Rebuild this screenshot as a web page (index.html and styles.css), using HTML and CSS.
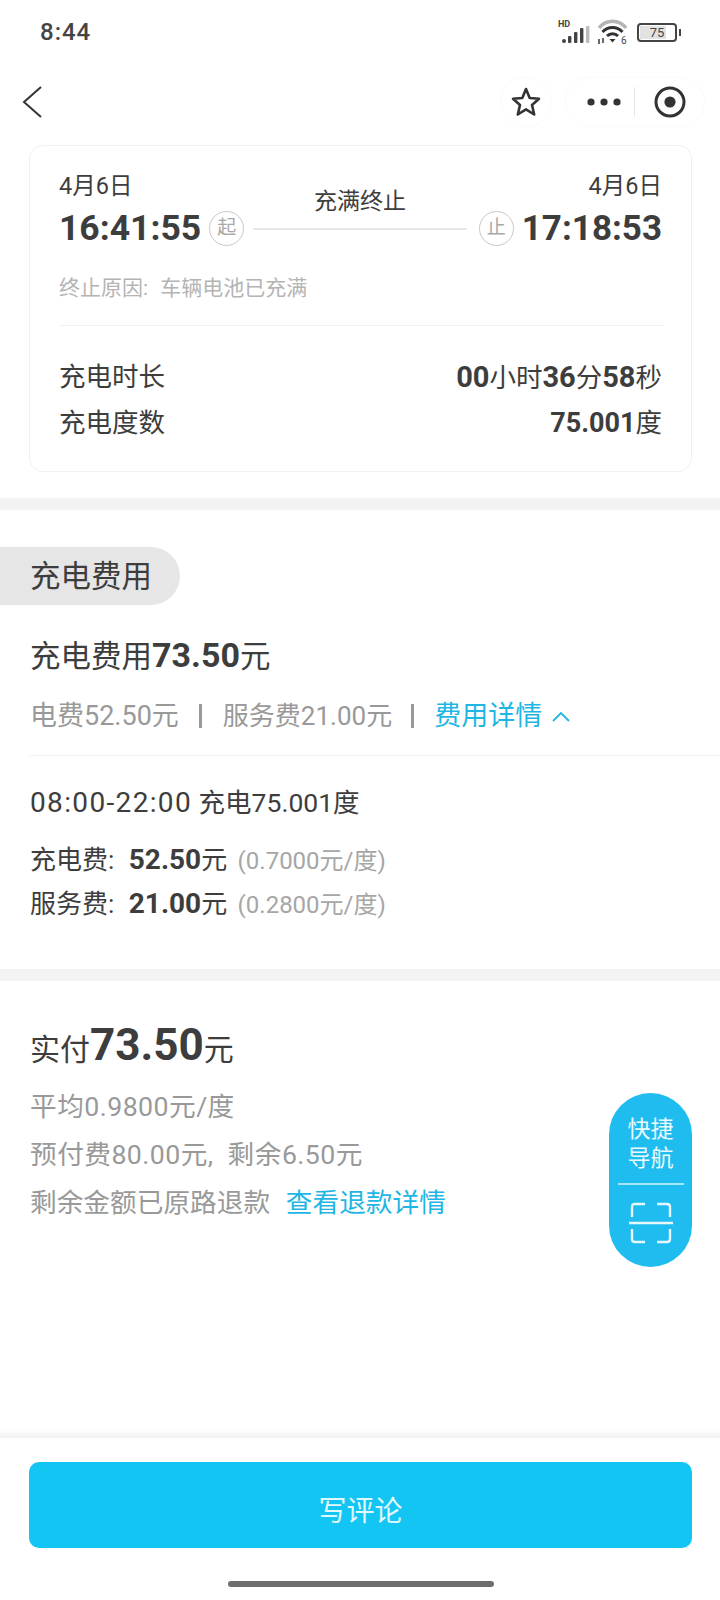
FILE: index.html
```html
<!DOCTYPE html>
<html lang="zh-CN">
<head>
    <meta charset="UTF-8">
    <meta name="viewport" content="width=device-width, initial-scale=1.0">
    <title>充电详情</title>
    <link rel="stylesheet" href="styles.css">
</head>
<body>
    <div class="page">
        <!-- 状态栏 -->
        <div class="status-bar">
            <span class="clock">8:44</span>
            <div class="status-icons">
                <svg class="signal" width="34" height="26" viewBox="0 0 34 26">
                    <text x="1" y="8" class="hd">HD</text>
                    <circle cx="7" cy="22" r="2" fill="#444"/>
                    <rect x="11" y="17" width="3.4" height="7" rx="1" fill="#444"/>
                    <rect x="17" y="13" width="3.4" height="11" rx="1" fill="#444"/>
                    <rect x="23" y="9" width="3.4" height="15" rx="1" fill="#444"/>
                    <rect x="29" y="7" width="3.4" height="17" rx="1" fill="#bbb"/>
                </svg>
                <svg class="wifi" width="32" height="26" viewBox="0 0 32 26">
                    <path d="M2 9 C9 0 22 0 29 9" fill="none" stroke="#b5b5b5" stroke-width="3.6"/>
                    <path d="M5.500 13 C11 7 20 7 25.500 13" fill="none" stroke="#333" stroke-width="3"/>
                    <path d="M10 17 C13 14 18 14 21 17" fill="none" stroke="#333" stroke-width="3"/>
                    <path d="M12.500 20 L18.500 20 L15.500 23.500 Z" fill="#333"/>
                    <path d="M2 20 V25 M6 19 V24" stroke="#444" stroke-width="1.6"/>
                    <text x="24" y="25" class="wifi-num">6</text>
                </svg>
                <div class="battery">
                    <span class="battery-body"><span class="battery-fill"></span><span class="battery-num">75</span></span>
                    <span class="battery-cap"></span>
                </div>
            </div>
        </div>

        <!-- 导航栏 -->
        <div class="nav-bar">
            <svg width="20" height="32" viewBox="0 0 20 32">
                <path d="M19 1 L2 16 L19 31" fill="none" stroke="#333" stroke-width="2"/>
            </svg>
            <div class="nav-actions">
                <div class="star-btn">
                    <svg width="32" height="32" viewBox="0 0 32 32">
                        <path d="M16 3 L19.700 12 L29 12.800 L22 19 L24.200 28.500 L16 23.400 L7.800 28.500 L10 19 L3 12.800 L12.300 12 Z" fill="none" stroke="#333" stroke-width="2.600" stroke-linejoin="round"/>
                    </svg>
                </div>
                <div class="capsule">
                    <svg width="34" height="8" viewBox="0 0 34 8">
                        <circle cx="4" cy="4" r="3.600" fill="#333"/>
                        <circle cx="17" cy="4" r="3.600" fill="#333"/>
                        <circle cx="30" cy="4" r="3.600" fill="#333"/>
                    </svg>
                    <span class="capsule-sep"></span>
                    <svg width="32" height="32" viewBox="0 0 32 32">
                        <circle cx="16" cy="16" r="14" fill="none" stroke="#333" stroke-width="3"/>
                        <circle cx="16" cy="16" r="5.600" fill="#333"/>
                    </svg>
                </div>
            </div>
        </div>

        <!-- 充电时间卡片 -->
        <div class="card">
            <div class="time-row">
                <div class="time-col">
                    <div class="date">4月6日</div>
                    <div class="time-line">
                        <span class="time">16:41:55</span>
                        <span class="time-tag">起</span>
                    </div>
                </div>
                <div class="time-mid">
                    <div class="end-label">充满终止</div>
                    <div class="time-track"></div>
                </div>
                <div class="time-col time-col-right">
                    <div class="date">4月6日</div>
                    <div class="time-line">
                        <span class="time-tag">止</span>
                        <span class="time">17:18:53</span>
                    </div>
                </div>
            </div>
            <div class="reason">终止原因: 车辆电池已充满</div>
            <div class="card-line"></div>
            <div class="stat-row stat-first">
                <span>充电时长</span>
                <span class="stat-time"><b>00</b>小时<b>36</b>分<b>58</b>秒</span>
            </div>
            <div class="stat-row">
                <span>充电度数</span>
                <span><b>75.001</b>度</span>
            </div>
        </div>

        <div class="band band-one"></div>

        <!-- 充电费用 -->
        <div class="fee">
            <div class="pill">充电费用</div>
            <div class="fee-total">充电费用<b>73.50</b>元</div>
            <div class="fee-sub">
                <span>电费52.50元</span>
                <span class="bar"></span>
                <span class="fee-service">服务费21.00元</span>
                <span class="bar"></span>
                <span class="link">费用详情</span>
                <svg width="20" height="12" viewBox="0 0 20 12">
                    <path d="M2 11 L10 3 L18 11" fill="none" stroke="#1fb6e4" stroke-width="1.800"/>
                </svg>
            </div>
            <div class="fee-line"></div>
            <div class="period"><span class="period-time">08:00-22:00</span> 充电75.001度</div>
            <div class="price-row"><span class="price-label">充电费:</span> <b>52.50</b>元 <small>(0.7000元/度)</small></div>
            <div class="price-row"><span class="price-label">服务费:</span> <b>21.00</b>元 <small>(0.2800元/度)</small></div>
        </div>

        <div class="band band-two"></div>

        <!-- 实付 -->
        <div class="paid">
            <div class="paid-total">实付<b>73.50</b>元</div>
            <div class="paid-line paid-num">平均0.9800元/度</div>
            <div class="paid-line paid-num">预付费80.00元, 剩余6.50元</div>
            <div class="paid-line">剩余金额已原路退款 <span class="link refund">查看退款详情</span></div>
        </div>

        <!-- 悬浮按钮 -->
        <div class="float-btn">
            <div class="float-text">快捷<br>导航</div>
            <div class="float-line"></div>
            <svg width="44" height="42" viewBox="0 0 44 42">
                <path d="M3 15 V5 Q3 2 6 2 H16 M28 2 H38 Q41 2 41 5 V15 M3 27 V37 Q3 40 6 40 H16 M28 40 H38 Q41 40 41 37 V27" fill="none" stroke="#e6f8fe" stroke-width="2.400"/>
                <path d="M0 21 H44" stroke="#e6f8fe" stroke-width="2.600"/>
            </svg>
        </div>

        <!-- 底部 -->
        <div class="footer">
            <div class="footer-shade"></div>
            <div class="footer-body">
                <div class="comment-btn">写评论</div>
                <div class="home-bar"></div>
            </div>
        </div>
    </div>
</body>
</html>
```

FILE: styles.css
```css
* {
    box-sizing: border-box;
}
body {
    margin: 0;
    background: #fff;
    font-family: Roboto, "Noto Sans CJK SC", sans-serif;
    color: #3d3d3d;
}
b {
    font-weight: 700;
}
.page {
    position: relative;
    width: 720px;
    height: 1600px;
    overflow: hidden;
    background: #fff;
}

/* status bar */
.status-bar {
    height: 62px;
    padding: 2px 39px 0 40px;
    display: flex;
    justify-content: space-between;
    align-items: center;
}
.clock {
    font-size: 24px;
    font-weight: 500;
    letter-spacing: 1px;
    color: #444;
}
.status-icons {
    display: flex;
    align-items: center;
    gap: 6px;
}
.hd {
    font: 700 9px Roboto, sans-serif;
    fill: #444;
}
.wifi-num {
    font: 10px Roboto, sans-serif;
    fill: #444;
}
.battery {
    display: flex;
    align-items: center;
    gap: 2px;
    margin-left: 2px;
}
.battery-body {
    position: relative;
    width: 40px;
    height: 19px;
    border: 2px solid #444;
    border-radius: 4px;
    display: block;
}
.battery-fill {
    position: absolute;
    left: 1px;
    top: 1px;
    bottom: 1px;
    width: 26px;
    background: #e2e2e2;
}
.battery-num {
    position: relative;
    display: block;
    text-align: center;
    font-size: 13px;
    line-height: 15px;
    color: #444;
}
.battery-cap {
    width: 2px;
    height: 7px;
    background: #444;
}

/* nav */
.nav-bar {
    height: 80px;
    padding: 0 15px 0 22px;
    display: flex;
    justify-content: space-between;
    align-items: center;
}
.nav-actions {
    display: flex;
    align-items: center;
    gap: 12px;
}
.star-btn {
    width: 52px;
    height: 50px;
    margin-right: 1px;
    border: 1px solid #fbfbfb;
    border-radius: 26px;
    display: flex;
    align-items: center;
    justify-content: center;
}
.capsule {
    width: 140px;
    height: 50px;
    border: 1px solid #fbfbfb;
    border-radius: 25px;
    display: flex;
    align-items: center;
    padding-left: 21px;
}
.capsule-sep {
    width: 1px;
    height: 30px;
    background: #e8e8e8;
    margin: 0 19px 0 13px;
}

/* card */
.card {
    margin: 3px 28px 0 29px;
    height: 327px;
    border: 1px solid #f1f1f1;
    border-radius: 14px;
    padding: 24px 29px 0 29px;
}
.time-row {
    display: flex;
    height: 84px;
}
.time-col {
    display: flex;
    flex-direction: column;
}
.time-col-right {
    align-items: flex-end;
}
.date {
    font-size: 23.500px;
    line-height: 32px;
}
.time-line {
    display: flex;
    align-items: center;
    gap: 8px;
    height: 54px;
}
.time {
    font-size: 35.500px;
    font-weight: 700;
}
.time-col-right .time {
    font-size: 35px;
}
.time-tag {
    width: 35px;
    height: 35px;
    border: 1px solid #c9c9c9;
    border-radius: 50%;
    font-size: 19px;
    line-height: 32px;
    text-align: center;
    color: #a8a8a8;
}
.time-mid {
    flex: 1;
    padding: 0 12px 0 9px;
    text-align: center;
}
.end-label {
    font-size: 23px;
    line-height: 32px;
    margin-top: 16px;
}
.time-track {
    height: 2px;
    margin-top: 10px;
    background: #e6e6e6;
}
.reason {
    margin-top: 19px;
    font-size: 21px;
    line-height: 30px;
    word-spacing: 7px;
    color: #b4b4b4;
}
.card-line {
    height: 1px;
    margin: 22px -3px 0 0;
    background: #f1f1f1;
}
.stat-row {
    display: flex;
    justify-content: space-between;
    font-size: 26.500px;
    height: 46px;
    line-height: 46px;
}
.stat-row b {
    font-size: 27px;
}
.stat-row .stat-time b {
    font-size: 29px;
}
.stat-first {
    margin-top: 28px;
}

.band {
    height: 12px;
    background: #f3f3f3;
}
.band-one {
    margin-top: 26px;
}

/* fee */
.fee {
    height: 459px;
    padding-top: 37px;
}
.pill {
    width: 180px;
    height: 58px;
    padding-left: 30px;
    border-radius: 0 29px 29px 0;
    background: #e6e6e6;
    font-size: 30.500px;
    line-height: 59px;
}
.fee-total {
    margin: 26px 0 0 30px;
    font-size: 30.500px;
    height: 48px;
    line-height: 48px;
}
.fee-total b {
    font-size: 34px;
}
.fee-sub {
    margin: 17px 0 0 30px;
    display: flex;
    align-items: center;
    font-size: 27px;
    line-height: 40px;
    color: #999;
}
.fee-service {
    font-size: 26px;
    margin-right: -2px;
}
.fee-sub svg {
    margin-left: 9px;
}
.bar {
    width: 3px;
    height: 24px;
    margin: 0 20.500px;
    background: #999;
}
.link {
    color: #1fb6e4;
}
.fee-line {
    height: 1px;
    margin: 19px 0 0 29px;
    background: #f1f1f1;
}
.period {
    margin: 27px 0 0 30px;
    font-size: 26.500px;
    line-height: 40px;
}
.period-time {
    font-size: 28px;
    letter-spacing: 1.350px;
}
.price-row {
    margin-left: 30px;
    font-size: 26px;
    height: 44px;
    line-height: 44px;
}
.price-row b {
    font-size: 28px;
}
.price-label {
    margin-right: 8px;
}
.period + .price-row {
    margin-top: 15px;
}
.price-row small {
    font-size: 24px;
    margin-left: 4px;
    color: #a6a6a6;
}

/* paid */
.paid {
    padding: 34px 0 0 30px;
}
.paid-total {
    font-size: 30px;
    height: 60px;
    line-height: 60px;
}
.paid-total b {
    font-size: 44px;
}
.paid-line {
    font-size: 26.700px;
    height: 48px;
    line-height: 48px;
    word-spacing: 7px;
    color: #999;
}
.paid-num {
    letter-spacing: 0.450px;
}
.paid-total + .paid-line {
    margin-top: 8px;
}
.refund {
    margin-left: 2px;
}

/* floating button */
.float-btn {
    position: absolute;
    left: 609px;
    top: 1093px;
    width: 83px;
    height: 174px;
    border-radius: 42px;
    background: #1fbcf0;
    padding-top: 22px;
    display: flex;
    flex-direction: column;
    align-items: center;
}
.float-text {
    font-size: 23px;
    line-height: 29px;
    text-align: center;
    color: #eafaff;
}
.float-line {
    width: 66px;
    height: 2px;
    margin: 10px 0 17px;
    background: #a5e6fa;
}

/* footer */
.footer {
    position: absolute;
    left: 0;
    right: 0;
    top: 1430px;
}
.footer-shade {
    height: 8px;
    background: linear-gradient(#fff, #f1f1f1);
}
.footer-body {
    padding: 24px 28px 0 29px;
}
.comment-btn {
    height: 86px;
    padding-top: 14px;
    border-radius: 10px;
    background: #12c5f2;
    color: #e0f8fe;
    font-size: 28px;
    line-height: 72px;
    text-align: center;
}
.home-bar {
    width: 266px;
    height: 6px;
    margin: 33px auto 0;
    border-radius: 3px;
    background: #6e6e6e;
}
```
